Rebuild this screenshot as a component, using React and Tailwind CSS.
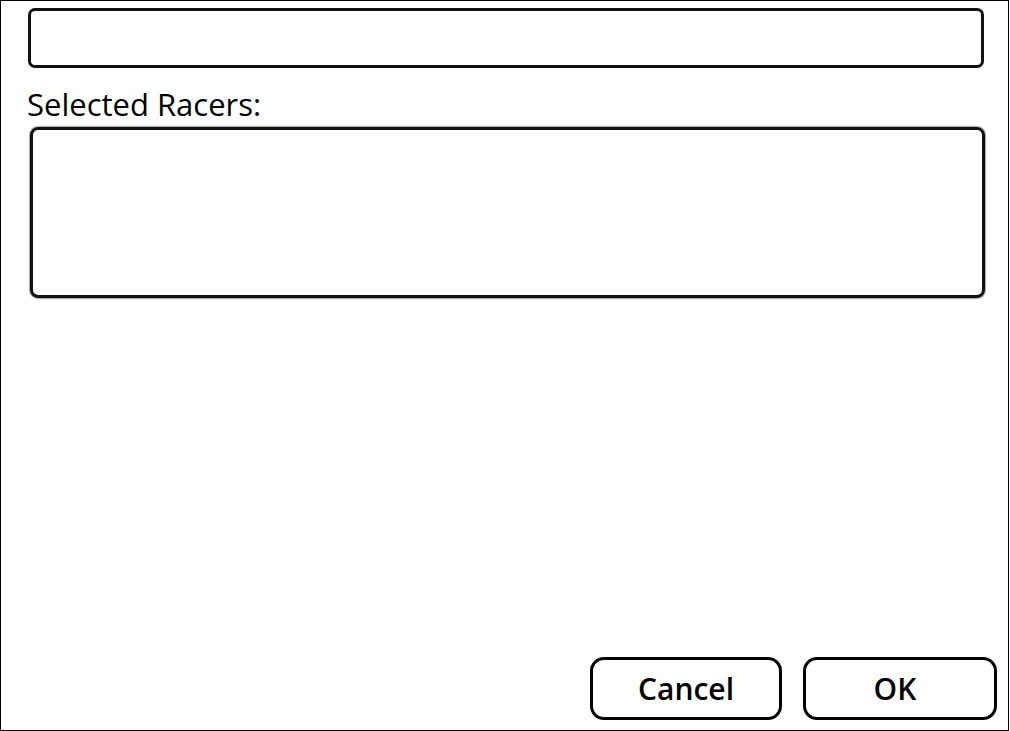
import React from 'react'

export default function App() {
  return (
    <div
      className="w-[1009px] h-[731px] border border-black bg-white flex flex-col"
      style={{ fontFamily: '"Open Sans", "Noto Sans", sans-serif' }}
    >
      {/* Name field */}
      <div className="ml-[27px] mt-[7px] w-[956px] h-[60px] rounded-[7px] border-[3px] border-[#111]" />

      {/* Label */}
      <div className="ml-[26px] mt-[18px] text-[31px] leading-[36px] text-black">
        Selected Racers:
      </div>

      {/* Selected racers list */}
      <div className="ml-[29px] mt-[5px] w-[955px] h-[171px] rounded-[8px] border-[3px] border-[#111] shadow-[0_0_1px_1px_rgba(0,0,0,0.35)]" />

      <div className="flex-1" />

      {/* Buttons */}
      <div className="flex justify-end gap-[21px] mr-[11px] mb-[10px]">
        <button className="w-[192px] h-[63px] rounded-[14px] border-[3px] border-black bg-white text-[30px] leading-none font-semibold text-black">
          Cancel
        </button>
        <button className="w-[194px] h-[63px] rounded-[14px] border-[3px] border-black bg-white text-[30px] leading-none font-semibold text-black pr-[10px]">
          OK
        </button>
      </div>
    </div>
  )
}
